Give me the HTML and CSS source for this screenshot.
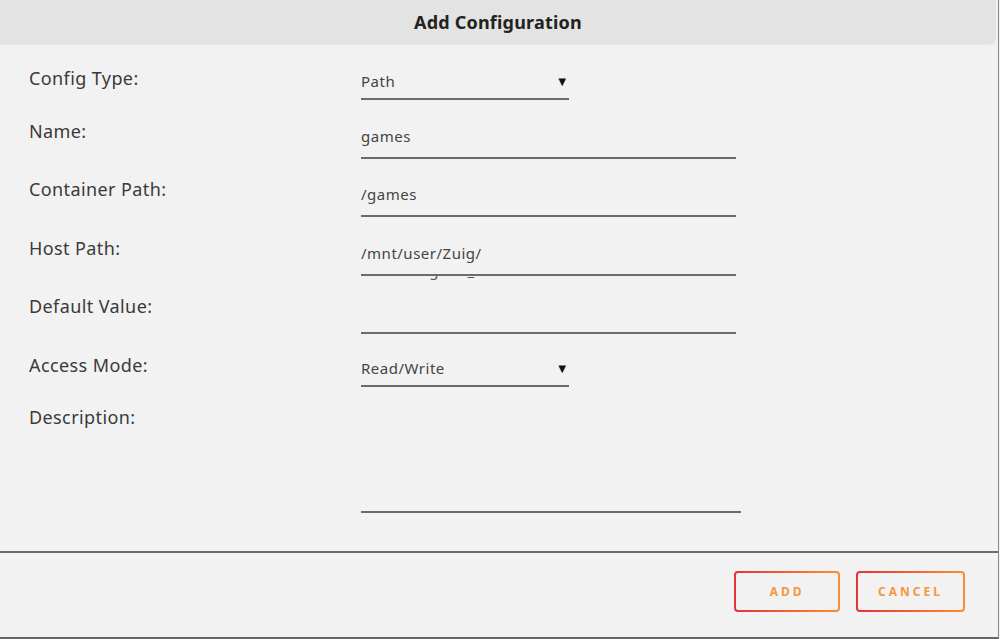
FILE: index.html
```html
<!DOCTYPE html>
<html lang="en">
  <head>
    <meta charset="UTF-8" />
    <meta name="viewport" content="width=device-width, initial-scale=1.0" />
    <title>Add Configuration</title>
    <link rel="stylesheet" href="styles.css">
  </head>
  <body>
    <div class="dialog">
      <div class="header">
        <h1>Add Configuration</h1>
      </div>
      <form class="form">
        <div class="row">
          <label>Config Type:</label>
          <div class="field select short">
            <span>Path</span>
            <span class="caret">&#9660;</span>
          </div>
        </div>
        <div class="row">
          <label>Name:</label>
          <div class="field text"><span>games</span></div>
        </div>
        <div class="row">
          <label>Container Path:</label>
          <div class="field text"><span>/games</span></div>
        </div>
        <div class="row">
          <label>Host Path:</label>
          <div class="field text host">
            <span>/mnt/user/Zuig/</span>
            <div class="peek"><span>unassigned_devices</span></div>
          </div>
        </div>
        <div class="row">
          <label>Default Value:</label>
          <div class="field text"></div>
        </div>
        <div class="row">
          <label>Access Mode:</label>
          <div class="field select short">
            <span>Read/Write</span>
            <span class="caret">&#9660;</span>
          </div>
        </div>
        <div class="row">
          <label>Description:</label>
          <div class="field area"></div>
        </div>
      </form>
      <div class="footer">
        <button class="btn">ADD</button>
        <button class="btn">CANCEL</button>
      </div>
    </div>
  </body>
</html>
```

FILE: styles.css
```css
:root {
  --bg: #f2f2f2;
  --header: #e3e3e3;
  --text: #333333;
  --line: #6b6b6b;
}

body {
  margin: 0;
  background: var(--bg);
  font-family: "Noto Sans", "Open Sans", sans-serif;
  color: var(--text);
}

.dialog {
  width: 998px;
  height: 637px;
  border-right: 1px solid #8a8a8a;
  border-bottom: 2px solid #666;
  display: flex;
  flex-direction: column;
}

.header {
  flex: none;
  width: 996px;
  height: 44px;
  background: var(--header);
  border-bottom-right-radius: 6px;
  box-shadow: 0 1px 1px rgba(0, 0, 0, 0.04);
  display: flex;
  align-items: center;
  justify-content: center;
}

h1 {
  margin: 0;
  font-size: 18px;
  font-weight: 700;
  letter-spacing: 0.2px;
  color: #222;
}

.form {
  flex: none;
  height: 487px;
  padding: 20px 0 0 29px;
  display: flex;
  flex-direction: column;
  gap: 16.5px;
  border-bottom: 2px solid var(--line);
}

.row {
  display: grid;
  grid-template-columns: 332px 1fr;
  align-items: start;
}

label {
  font-size: 18px;
  line-height: 28px;
  letter-spacing: 0.4px;
  color: #3a3a3a;
}

.field {
  margin-top: 6px;
  box-sizing: border-box;
  border-bottom: 2px solid var(--line);
  font-size: 15px;
  letter-spacing: 0.5px;
  color: #444;
  display: flex;
  align-items: center;
  justify-content: space-between;
}

.select {
  height: 30px;
  padding-bottom: 6px;
}

.short {
  width: 208px;
}

.caret {
  font-size: 13px;
  color: #111;
  margin-right: 0;
}

.text {
  width: 375px;
  height: 36px;
  padding-bottom: 8px;
}

.host {
  position: relative;
}

.peek {
  position: absolute;
  left: 20px;
  top: 36px;
  height: 4px;
  overflow: hidden;
  font-size: 15px;
  color: #555;
}

.peek span {
  display: block;
  margin-top: -16px;
  line-height: 20px;
}

.area {
  width: 380px;
  height: 104px;
}

.footer {
  flex: 1;
  display: flex;
  justify-content: flex-end;
  align-items: flex-start;
  padding: 18px 33px 0 0;
  gap: 16px;
}

.btn {
  height: 41px;
  padding: 0 20px;
  min-width: 106px;
  border: 2px solid transparent;
  border-radius: 4px;
  background: linear-gradient(var(--bg), var(--bg)) padding-box,
    linear-gradient(90deg, #e4323b, #ff8d2e) border-box;
  color: #f7963f;
  font-family: inherit;
  font-size: 12px;
  font-weight: 700;
  letter-spacing: 3px;
  cursor: pointer;
}
```
